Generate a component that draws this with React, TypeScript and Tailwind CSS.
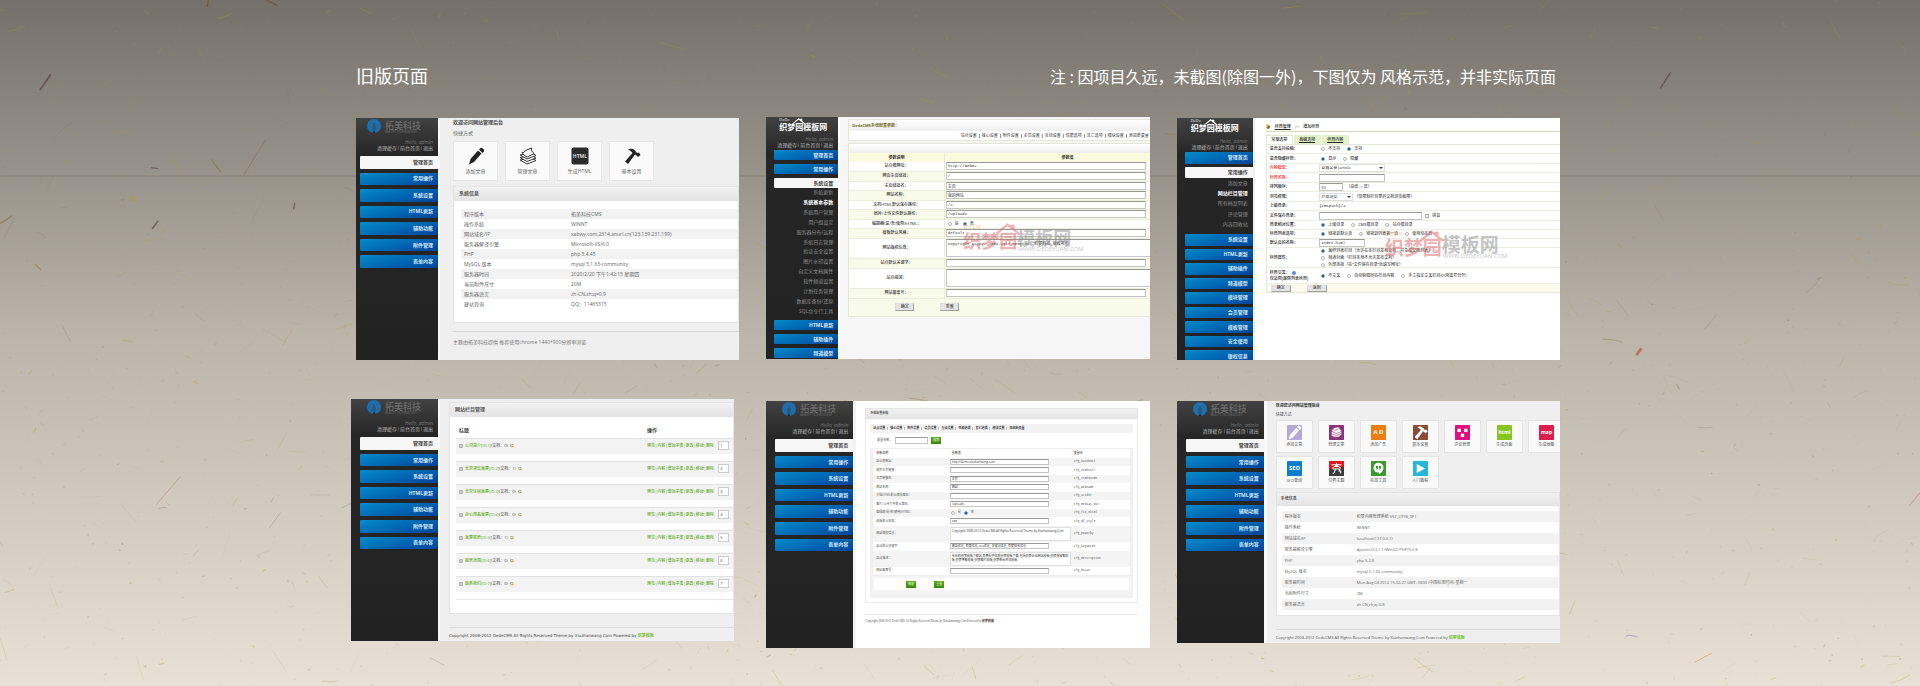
import React from 'react';

/* ---------- paper background ---------- */

function makeRandom(seed: number) {
  let a = seed;
  return () => {
    a = (a + 0x6d2b79f5) | 0;
    let t = Math.imul(a ^ (a >>> 15), 1 | a);
    t = (t + Math.imul(t ^ (t >>> 7), 61 | t)) ^ t;
    return ((t ^ (t >>> 14)) >>> 0) / 4294967296;
  };
}

const random = makeRandom(20);
const fibres = Array.from({ length: 2200 }, () => {
  const x = random() * 1920;
  const y = random() * 686;
  const len = 1.5 + Math.pow(random(), 6) * 26;
  const a = (random() - 0.5) * 2.6;
  const bend = (random() - 0.5) * 5;
  const dx = Math.cos(a) * len;
  const dy = Math.sin(a) * len;
  return {
    d: `M${x.toFixed(1)} ${y.toFixed(1)}q${(dx / 2).toFixed(1)} ${(dy / 2 + (len > 6 ? bend : 0)).toFixed(1)} ${dx.toFixed(1)} ${dy.toFixed(1)}`,
    stroke: random() > 0.2 ? '#b39345' : '#8a6a50',
    opacity: 0.08 + Math.pow(random(), 2) * 0.34,
    width: len > 6 ? 0.8 : 1.2,
  };
});

const longFibres = [
  { d: 'M43 90L54 74', stroke: '#5f4a4c', w: 1.6 },
  { d: 'M155 228L161 220', stroke: '#64525a', w: 1.6 },
  { d: 'M246 175L268 139', stroke: '#8a6c58', w: 0.8 },
  { d: 'M214 159L223 171', stroke: '#8a6d48', w: 1 },
  { d: 'M159 503L183 475', stroke: '#b9977f', w: 0.9 },
  { d: 'M0 224Q8 221 15 215', stroke: '#8d7356', w: 1 },
  { d: 'M269 0L280 6', stroke: '#66503f', w: 1.1 },
  { d: 'M211 0L210 7', stroke: '#75562c', w: 1.3 },
  { d: 'M154 167L161 168', stroke: '#6d5560', w: 1.2 },
  { d: 'M296 209L297 202', stroke: '#6e5560', w: 1.4 },
  { d: 'M38 263L44 269', stroke: '#9a8140', w: 1 },
  { d: 'M1634 354L1639 347', stroke: '#c05a5a', w: 2.6 },
  { d: 'M1692 660L1709 651', stroke: '#cfa182', w: 0.9 },
  { d: 'M1906 504L1920 487', stroke: '#b9977f', w: 1 },
  { d: 'M1623 634Q1628 632 1635 635', stroke: '#b4a4b8', w: 1.1 },
  { d: 'M1674 383L1677 388', stroke: '#9a8c80', w: 1 },
  { d: 'M1658 88L1668 72', stroke: '#5f4a4c', w: 1.4 },
  { d: 'M1600 338Q1612 338 1620 341', stroke: '#a08a60', w: 0.8 },
];

const Paper = () => (
  <svg aria-hidden="true" className="absolute inset-0 h-full w-full" viewBox="0 0 1920 686" preserveAspectRatio="xMidYMin slice" fill="none">
    <path d="M0 175.5H1920" stroke="#7f776b" strokeOpacity=".6" />
    <ellipse cx="136" cy="198" rx="3.5" ry="3" fill="#a89a55" opacity=".6" />
    {fibres.map((f, i) => (
      <path key={i} d={f.d} stroke={f.stroke} strokeOpacity={f.opacity} strokeWidth={f.width} />
    ))}
    {longFibres.map((f, i) => (
      <path key={i} d={f.d} stroke={f.stroke} strokeWidth={f.w} strokeOpacity=".8" />
    ))}
  </svg>
);

/* ---------- logos ---------- */

const TuomeiLogo = () => (
  <div className="flex h-[20px] items-start gap-1 pt-px">
    <svg aria-hidden="true" viewBox="0 0 28 28" className="h-[14px] w-[14px] shrink-0">
      <circle cx="14" cy="14" r="14" fill="#1c6fae" />
      <path d="M14 0Q10.500 12 12 28h4Q17.500 12 14 0Z" fill="#222" />
      <path d="M14 3v22" stroke="#5aa7dc" strokeWidth="1.500" />
    </svg>
    <div className="pt-px text-[#6d6d6d]">
      <div className="text-[9px] leading-[11px] font-medium whitespace-nowrap">拓美科技</div>
      <div className="text-[3px] leading-[3px] whitespace-nowrap">BEAUTY TECHNOLOGY</div>
    </div>
  </div>
);

const roof = 'M2 20L22 3l7 6V5h4v7l10 8';

const DedeLogo = () => (
  <div className="relative h-[18px] whitespace-nowrap text-white">
    <div className="flex items-end pt-[5px]">
      <span className="text-[8px] leading-[10px] font-bold">织梦园</span>
      <span className="text-[8px] leading-[10px] font-bold">模板网</span>
    </div>
    <svg aria-hidden="true" viewBox="0 0 46 22" className="absolute top-px left-[12px] h-[6px] w-[16px]" fill="none" stroke="#fff" strokeWidth="4">
      <path d={roof} />
    </svg>
    <span className="absolute top-px left-0 text-[4px] leading-[4px]">DeDe</span>
  </div>
);

const Watermark = ({ className, large }: { className: string; large?: boolean }) => (
  <div className={`pointer-events-none absolute whitespace-nowrap opacity-50 ${className}`}>
    <svg
      aria-hidden="true" viewBox="0 0 46 22" fill="none" stroke="#d9666a" strokeWidth="4"
      className={`absolute top-0 h-[12px] w-[26px] ${large ? 'left-[34px]' : 'left-[32px]'}`}
    >
      <path d={roof} />
    </svg>
    <div className="text-[7px] leading-[8px] text-[#f0a860]">DeDe</div>
    <div className={`flex items-start font-bold ${large ? 'text-[19px]' : 'text-[18px]'}`}>
      <span className="leading-[20px] text-[#d9666a]">织梦园</span>
      <span className="flex flex-col text-[#8c8c8c]">
        <span className="leading-[14px]">模板网</span>
        <span className="pt-px pl-px text-[6px] leading-[6px] font-normal">WWW.DEDEYUAN.COM</span>
      </span>
    </div>
  </div>
);

/* ---------- sidebar ---------- */

type Group = { items: string[]; grid: string; active?: number; sub?: string[]; subGrid?: string; current?: string };

const Sidebar = ({ logo, width, links, navClass, groups, className = '' }: {
  logo: React.ReactNode; width: string; links: string; navClass: string; groups: Group[]; className?: string;
}) => (
  <aside className={`shrink-0 overflow-hidden bg-[#222] bg-linear-to-b from-[#424242] via-[#262626] via-15% to-[#222] ${width} ${className}`}>
    {logo}
    <div className={`text-right ${links}`}>
      <div className="text-[5px] leading-[6px] text-[#777] italic">Hello, admin</div>
      <div className="flex justify-end gap-px text-[5px] leading-[6px] whitespace-nowrap text-[#b5b5b5]">
        <a href="#cache">清理缓存</a><i className="w-px scale-y-75 bg-[#555]" />
        <a href="#home">前台首页</a><i className="w-px scale-y-75 bg-[#555]" />
        <a href="#exit">退出</a>
      </div>
    </div>
    <nav className={`flex flex-col text-right text-[5px] ${navClass}`}>
      {groups.map((g, gi) => (
        <React.Fragment key={gi}>
          <div className={`grid auto-rows-fr ${g.grid}`}>
            {g.items.map((t, i) => (
              <a
                key={t}
                href="#nav"
                className={`flex items-center justify-end rounded-l-[1px] pr-[5px] leading-none font-bold whitespace-nowrap ${
                  g.active === i ? 'bg-[#f6f6f6] text-[#444]' : 'bg-linear-165 from-[#0b8bca] via-[#0068b4] to-[#00439a] text-[#d6e6f6]'
                }`}
              >
                {t}
              </a>
            ))}
          </div>
          {g.sub && (
            <ul className={`grid auto-rows-fr items-center pr-[5px] text-[#8f8f8f] ${g.subGrid}`}>
              {g.sub.map((t) => (
                <li key={t} className={`leading-none whitespace-nowrap ${t === g.current ? 'font-bold text-white' : ''}`}>
                  <a href="#sub">{t}</a>
                </li>
              ))}
            </ul>
          )}
        </React.Fragment>
      ))}
    </nav>
  </aside>
);

const mainNav: Group[] = [
  { items: ['管理首页', '常用操作', '系统设置', 'HTML更新', '辅助功能', '附件管理', '表单内容'], grid: 'h-[112px] gap-1', active: 0 },
];

const TuomeiSidebar = ({ wide, className = '' }: { wide?: boolean; className?: string }) => (
  <Sidebar
    className={className}
    width={wide ? 'w-[87px]' : 'w-[82px]'}
    logo={<div className={wide ? 'pl-[16px]' : 'pl-[11px]'}><TuomeiLogo /></div>}
    links="pt-px pr-[5px] h-[18px]"
    navClass={wide ? 'pl-[9px]' : 'pl-[4px]'}
    groups={mainNav}
  />
);

/* ---------- shared pieces ---------- */

const Shot = ({ children, className = '', clip = true }: { children: React.ReactNode; className?: string; clip?: boolean }) => (
  <section className={`relative flex aspect-[383/242] ${clip ? 'overflow-hidden' : ''} ${className}`}>{children}</section>
);

const Heading = ({ children, className }: { children: React.ReactNode; className: string }) => (
  <h2 className={`border border-[#e4e4e4] bg-linear-to-b from-[#f2f2f2] to-[#e4e4e4] font-bold text-[#555] ${className}`}>{children}</h2>
);

const field = 'block border border-[#c4c4c4] border-t-[#999] bg-white p-0 pl-px leading-none text-[#333] outline-none';

const Radio = ({ name, label, on }: { name: string; label: string; on?: boolean }) => (
  <label className="flex items-center gap-[3px] whitespace-nowrap">
    <input type="radio" name={name} defaultChecked={on} className="m-0 h-[4px] w-[4px] appearance-none rounded-full border border-[#b5b5b5] bg-white checked:border-[#7fa9cf] checked:bg-[#124a82]" />
    {label}
  </label>
);

const InfoTable = ({ rows, row, label }: { rows: string[][]; row: string; label: string }) => (
  <table className="w-full table-fixed border-collapse leading-none text-[#666]">
    <tbody>
      {rows.map(([k, v]) => (
        <tr key={k} className={`odd:bg-[#f2f2f2] ${row}`}>
          <th scope="row" className={`p-0 pl-[3px] text-left font-normal ${label}`}>{k}</th>
          <td className="p-0 whitespace-nowrap">{v}</td>
        </tr>
      ))}
    </tbody>
  </table>
);

/* ---------- 1: dashboard ---------- */

const Pencil = ({ fill }: { fill: string }) => (
  <g fill={fill}>
    <path d="M7 24L22 7l7 6L14 30l-10 5Z" />
    <path d="M24 5l3-3q2-1 4 .5l3 3q1 2-.5 4l-2.500 2.500Z" />
  </g>
);

const Hammer = ({ fill }: { fill: string }) => (
  <path fill={fill} d="M10 5Q19 1 25 8l3 4 4-1 3 5-5 4-4-4-2-1L10 34l-6-5L19 12Q16 7 10 5Z" />
);

const dashIcons = [
  { label: '添加文章', art: <Pencil fill="#222" /> },
  {
    label: '管理文章',
    art: (
      <g fill="#fff" stroke="#333" strokeWidth="2" strokeLinejoin="round">
        <path d="M2 26l14 8 18-7-9-5Z" /><path d="M2 21l14 8 18-7-9-5Z" /><path d="M2 16l14 8 18-7-9-5Z" />
        <path d="M6 11q5 1 7-4l12-5q-2 6 5 11l-13 7Q9 18 6 11Z" />
      </g>
    ),
  },
  {
    label: '生成HTML',
    art: (
      <g>
        <rect x="1" y="1" width="34" height="34" rx="4" fill="#2b2b2b" />
        <text x="18" y="22" textAnchor="middle" fontSize="10" fontWeight="bold" fill="#ddd">HTML</text>
      </g>
    ),
  },
  { label: '基本设置', art: <Hammer fill="#222" /> },
];

const Dashboard = () => (
  <Shot>
    <TuomeiSidebar />
    <div className="min-w-0 flex-1 border-l-2 border-[#f8f8f8] bg-[#efefef] pl-[13px] text-[5px]">
      <h1 className="text-[5px] leading-[8px] font-bold text-[#444]">欢迎访问网站管理后台</h1>
      <p className="pt-px leading-[12px] text-[#666]">快捷方式</p>
      <div className="mt-[2px] flex gap-[7px]">
        {dashIcons.map((d) => (
          <a key={d.label} href="#quick" className="flex h-[40px] w-[45px] flex-col items-center border border-[#e6e6e6] bg-[#fafafa] pt-[5px] leading-[10px] text-[#666]">
            <svg aria-hidden="true" viewBox="0 0 36 36" className="mb-px h-[18px] w-[18px]">{d.art}</svg>
            {d.label}
          </a>
        ))}
      </div>
      <Heading className="mt-[5px] h-[15px] pl-[5px] text-[5px] leading-[13px]">系统信息</Heading>
      <div className="h-[122px] border border-t-0 border-[#e4e4e4] bg-white pt-[8px] pl-[7px]">
        <InfoTable
          row="h-[10px]"
          label="w-[110px]"
          rows={[
            ['程序版本', '拓美科技CMS'],
            ['操作系统', 'WINNT'],
            ['网站域名/IP', 'xabwy.com,2314,anurl.cn(123.139.231.199)'],
            ['服务器解译引擎', 'Microsoft-IIS/6.0'],
            ['PHP', 'php 5.4.45'],
            ['MySQL 版本', 'mysql 5.1.63-community'],
            ['服务器时间', '2020/2/20 下午1:42:15 星期四'],
            ['当前附件尺寸', '20M'],
            ['服务器语言', 'zh-CN,zh;q=0.9'],
            ['建站咨询', 'QQ：11465315'],
          ]}
        />
      </div>
      <footer className="mt-[8px] border-t border-[#d8d8d8] pt-[5px] leading-[10px] whitespace-nowrap text-[#777]">
        主题由拓美科技提供 推荐使用chrome 1440*900分辨率浏览
      </footer>
    </div>
  </Shot>
);

/* ---------- 2: system parameters (light theme) ---------- */

const settingTabs = ['站点设置', '核心设置', '附件设置', '会员设置', '互动设置', '性能选项', '其它选项', '模块设置', '添加新变量'];

const yellowRows: { label: string; kind: 'text' | 'area' | 'radio'; value: string }[] = [
  { label: '站点根网址：', kind: 'text', value: 'http://web02' },
  { label: '网页主页链接：', kind: 'text', value: '/' },
  { label: '主页链接名：', kind: 'text', value: '主页' },
  { label: '网站名称：', kind: 'text', value: '我的网站' },
  { label: '文档HTML默认保存路径：', kind: 'text', value: '/a' },
  { label: '图片/上传文件默认路径：', kind: 'text', value: '/uploads' },
  { label: '编辑器(是/否)使用XHTML：', kind: 'radio', value: '' },
  { label: '模板默认风格：', kind: 'text', value: 'default' },
  { label: '网站版权信息：', kind: 'area', value: 'Copyright &copy; 2002-2017 DEDECMS. 织梦科技 版权所有' },
  { label: '站点默认关键字：', kind: 'text', value: '' },
  { label: '站点描述：', kind: 'area', value: '' },
  { label: '网站备案号：', kind: 'text', value: '' },
];

const grayButton = 'border border-[#dcdcdc] border-r-[#a0a0a0] border-b-[#a0a0a0] bg-[#e4e4e4] text-[4px] leading-none text-[#222]';

const YellowSettings = () => (
  <Shot className="-mt-px">
    <Sidebar
      width="w-[72px]"
      logo={<div className="pl-[13px]"><DedeLogo /></div>}
      links="pt-px pr-[5px] h-[15px]"
      navClass="pl-[8px] gap-1"
      groups={[
        {
          items: ['管理首页', '常用操作', '系统设置'], grid: 'h-[38px] gap-1', active: 2,
          subGrid: 'h-[128px] -mt-1', current: '系统基本参数',
          sub: ['系统更新', '系统基本参数', '系统用户管理', '用户组设定', '服务器分布/远程', '系统日志管理', '验证安全设置', '图片水印设置', '自定义文档属性', '软件频道设置', '计划任务管理', '数据库备份/还原', 'SQL命令行工具'],
        },
        { items: ['HTML更新', '辅助插件', '频道模型'], grid: 'h-[38px] gap-1' },
      ]}
    />
    <div className="min-w-0 flex-1 overflow-hidden border-l-2 border-white bg-[#f6f6f6] pt-[2px] pl-[8px] text-[4px] text-[#333]">
      <div className="border border-r-0 border-[#e4e6da] bg-white">
        <h1 className="h-[11px] bg-linear-to-b from-white to-[#efefef] pl-[3px] text-[4px] leading-[11px] font-bold text-[#6e6a1c]">DedeCMS系统配置参数：</h1>
        <div className="flex h-[9px] items-center justify-end gap-[2px] pr-px whitespace-nowrap text-[#333]">
          {settingTabs.map((t, i) => (
            <React.Fragment key={t}>
              {i > 0 && <i className="h-[4px] w-px bg-[#999]" />}
              <a href="#tab" className="leading-none">{t}</a>
            </React.Fragment>
          ))}
        </div>
      </div>
      <div className="mt-[2px] w-[343px] border border-[#e4e6da]">
        <div className="h-[9px] bg-linear-to-b from-white to-[#eeeeee]" />
        <table className="w-full table-fixed border-collapse leading-none">
          <thead>
            <tr className="h-[9px] bg-[#fafbdc]">
              <th className="w-[95px] border-r border-[#e8ead8] p-0 font-bold">参数说明</th>
              <th className="p-0 font-bold">参数值</th>
            </tr>
          </thead>
          <tbody>
            {yellowRows.map((r) => (
              <tr key={r.label} className={`border-b border-[#ebeedd] odd:bg-white even:bg-[#f9fbea] ${r.kind === 'area' ? 'h-[20px]' : 'odd:h-[9px] even:h-[10px]'}`}>
                <th scope="row" className="border-r border-[#e8ead8] p-0 font-medium whitespace-nowrap">{r.label}</th>
                <td className="p-0 pl-px">
                  {r.kind === 'text' && <input aria-label={r.label} defaultValue={r.value} className={`h-[8px] w-[200px] font-['Liberation_Mono','Noto_Sans_CJK_SC',monospace] text-[4px] ${field}`} />}
                  {r.kind === 'area' && <textarea aria-label={r.label} defaultValue={r.value} className={`h-[18px] w-[240px] resize-none overflow-hidden pt-[2px] font-['Liberation_Mono','Noto_Sans_CJK_SC',monospace] text-[4px] ${field}`} />}
                  {r.kind === 'radio' && (
                    <div className="flex gap-[4px] pl-[2px]"><Radio name="xhtml" label="是" /><Radio name="xhtml" label="否" on /></div>
                  )}
                </td>
              </tr>
            ))}
          </tbody>
        </table>
        <div className="flex h-[17px] items-center gap-[26px] bg-[#f9fbea] pl-[46px]">
          <button className={`h-[8px] w-[19px] ${grayButton}`}>确定</button>
          <button className={`h-[8px] w-[19px] ${grayButton}`}>重置</button>
        </div>
      </div>
    </div>
    <Watermark className="top-[106px] left-[197px]" />
  </Shot>
);

/* ---------- 3: add a column ---------- */

const ColumnRow = ({ label, red, inset, h = 'h-[10px]', children }: { label: React.ReactNode; red?: boolean; inset?: boolean; h?: string; children: React.ReactNode }) => (
  <tr className={`border-b border-[#ecede4] ${h}`}>
    <th scope="row" className={`w-[53px] p-0 pl-[3px] text-left font-medium whitespace-nowrap ${red ? 'text-[#f01818]' : ''}`}>{label}</th>
    <td className="p-0"><div className={`flex items-center gap-[7px] whitespace-nowrap ${inset ? 'pl-[2px]' : ''}`}>{children}</div></td>
  </tr>
);

const smallSelect = 'h-[8px] appearance-none border border-[#e0e0e0] bg-white p-0 pl-px text-[4px] leading-none text-[#222]';

const AddColumn = () => (
  <Shot>
    <Sidebar
      width="w-[76px]"
      logo={<div className="pl-[14px]"><DedeLogo /></div>}
      links="pt-[2px] pr-[5px] h-[16px]"
      navClass="pl-[8px]"
      groups={[
        { items: ['管理首页', '常用操作'], grid: 'h-[26px] gap-[3px]', active: 1, subGrid: 'h-[52px] mb-1', current: '网站栏目管理', sub: ['添加文章', '网站栏目管理', '所有档案列表', '评论管理', '内容回收站'] },
        { items: ['系统设置', 'HTML更新', '辅助插件', '频道模型', '模块管理', '会员管理', '模板管理', '安全使用', '版权信息'], grid: 'h-[128px] shrink-0 gap-[3px]' },
      ]}
    />
    <div className="min-w-0 flex-1 overflow-hidden border-l-2 border-[#eee] bg-white pl-[11px] text-[4px] text-[#222]">
      <div className="flex h-[14px] items-center gap-[4px] border-b border-[#d6d8bc] pt-[4px] font-medium">
        <svg aria-hidden="true" viewBox="0 0 12 12" className="h-[5px] w-[5px]">
          <path d="M1 1h5v7H1Z" fill="#d8b93c" /><path d="M6 3l4 3-2 5H3Z" fill="#9c4a34" /><path d="M1 8l6 3" stroke="#3a7a36" strokeWidth="2" />
        </svg>
        <a href="#columns" className="underline">栏目管理</a><span>&gt;&gt;</span><span>增加栏目</span>
      </div>
      <div className="mt-[3px] flex gap-px text-center leading-[8px] font-medium">
        <button className="h-[9px] w-[27px] border border-b-0 border-[#e4e6da] bg-white">常规选项</button>
        <button className="h-[9px] w-[27px] bg-[#e3f2c8] underline">高级选项</button>
        <button className="h-[9px] w-[27px] bg-[#e3f2c8] underline">栏目内容</button>
      </div>
      <table className="w-full border-collapse border border-r-0 border-[#e4e6da] leading-none">
        <tbody>
          <ColumnRow label="是否支持投稿：" inset h="h-[9px]"><Radio name="post" label="不支持" /><Radio name="post" label="支持" on /></ColumnRow>
          <ColumnRow label="是否隐藏栏目：" inset><Radio name="hide" label="显示" on /><Radio name="hide" label="隐藏" /></ColumnRow>
          <ColumnRow label="内容模型：" red h="h-[9px]">
            <span className="relative">
              <select aria-label="内容模型" className={`w-[66px] ${smallSelect}`}><option>普通文章|article</option></select>
              <i className="absolute top-[3px] right-[2px] border-x-2 border-t-2 border-x-transparent border-t-[#333]" />
            </span>
          </ColumnRow>
          <ColumnRow label="栏目名称：" red><input aria-label="栏目名称" className={`h-[8px] w-[66px] text-[4px] ${field}`} /></ColumnRow>
          <ColumnRow label="排列顺序：" h="h-[9px]"><input aria-label="排列顺序" defaultValue="50" className={`h-[8px] w-[24px] text-[4px] ${field}`} /><span className="-ml-[4px]">（由低 -&gt; 高）</span></ColumnRow>
          <ColumnRow label="浏览权限：">
            <span className="relative">
              <select aria-label="浏览权限" className={`w-[34px] ${smallSelect}`}><option>开放浏览</option></select>
              <i className="absolute top-[3px] right-[2px] border-x-2 border-t-2 border-x-transparent border-t-[#333]" />
            </span>
            <span className="-ml-[6px]">（仅限制栏目里的文档浏览权限）</span>
          </ColumnRow>
          <ColumnRow label="上级目录：" h="h-[9px]"><span className="font-['Liberation_Mono',monospace]">{'{cmspath}/a'}</span></ColumnRow>
          <ColumnRow label="文件保存目录：">
            <input aria-label="文件保存目录" className={`h-[8px] w-[103px] text-[4px] ${field}`} />
            <label className="-ml-[4px] flex items-center gap-[3px]"><input type="checkbox" className="h-[4px] w-[4px] appearance-none border border-[#aaa] bg-white" />拼音</label>
          </ColumnRow>
          <ColumnRow label="目录相对位置：" inset h="h-[9px]"><Radio name="dir" label="上级目录" on /><Radio name="dir" label="CMS根目录" /><Radio name="dir" label="站点根目录" /></ColumnRow>
          <ColumnRow label="栏目列表选项：" inset h="h-[9px]"><Radio name="list" label="链接到默认页" on /><Radio name="list" label="链接到列表第一页" /><Radio name="list" label="使用动态页" /></ColumnRow>
          <ColumnRow label="默认页的名称：" h="h-[9px]"><input aria-label="默认页的名称" defaultValue="index.html" className={`h-[8px] w-[46px] font-['Liberation_Mono',monospace] text-[4px] ${field}`} /></ColumnRow>
          <ColumnRow label="栏目属性：" inset h="h-[20px]">
            <div className="flex flex-col gap-[3px]">
              <Radio name="attr" label="最终列表栏目（允许在本栏目发布文档，并生成文档列表）" on />
              <Radio name="attr" label="频道封面（栏目本身不允许发布文档）" />
              <Radio name="attr" label="外部连接（在“文件保存目录”处填写网址）" />
            </div>
          </ColumnRow>
          <ColumnRow
            inset
            h="h-[16px]"
            label={(
              <div className="leading-[6px]">
                <div className="flex items-center gap-[2px]">栏目交叉：<i className="h-[4px] w-[4px] rounded-full bg-[#5b8fd0]" /></div>
                <div>仅适用[最终列表栏目]</div>
              </div>
            )}
          >
            <Radio name="cross" label="不交叉" on /><Radio name="cross" label="自动获取同名栏目内容" /><Radio name="cross" label="手工指定交叉栏目ID(用逗号分开)" />
          </ColumnRow>
        </tbody>
      </table>
      <div className="flex h-[9px] items-center gap-[16px] border-b border-l border-[#e4e6da] bg-[#fafbea] pl-[4px]">
        <button className={`h-[7px] w-[20px] ${grayButton}`}>确定</button>
        <button className={`h-[7px] w-[20px] ${grayButton}`}>返回</button>
      </div>
    </div>
    <Watermark large className="top-[112px] left-[208px]" />
  </Shot>
);

/* ---------- 4: column list ---------- */

const columns = [
  ['公司简介', '0'], ['北京餐饮发票', '1'], ['北京住宿发票', '0'], ['办公用品发票', '0'], ['发票展示', '1'], ['服务范围', '0'], ['联系我们', '0'],
];

const Copyright = ({ className }: { className: string }) => (
  <footer className={`whitespace-nowrap ${className}`}>
    Copyright 2008-2012 DedeCMS All Rights Reserved Theme by Xiuzhanwang.Com Powered by{' '}
    <a href="#dede" className="font-bold text-[#7ac030]">织梦模板</a>
  </footer>
);

const ColumnList = () => (
  <Shot className="-mt-[2px] mr-[5px] -ml-[5px]">
    <TuomeiSidebar wide />
    <div className="min-w-0 flex-1 overflow-hidden border-l-2 border-[#f8f8f8] bg-[#efefef] pt-[3px] pl-[9px] text-[4px] text-[#444]">
      <Heading className="h-[15px] pl-[5px] text-[5px] leading-[13px]">网站栏目管理</Heading>
      <div className="h-[197px] border border-t-0 border-[#e4e4e4] bg-white pt-[6px] pl-[6px]">
        <table className="w-full table-fixed border-collapse border-b border-[#e6e6e6] leading-none">
          <thead>
            <tr className="h-[15px] text-left text-[5px]">
              <th className="w-[191px] p-0 pt-px pl-[3px]">标题</th>
              <th className="p-0 pt-px">操作</th>
            </tr>
          </thead>
          <tbody>
            {columns.map(([name, count], i) => (
              <tr key={name} className="h-[23px] border-t border-[#e2e2e2] bg-linear-to-b from-[#f3f3f3] from-68% to-white to-68%">
                <td className="p-0 pb-[8px] pl-[3px]">
                  <div className="flex items-center gap-[2px] whitespace-nowrap">
                    <svg aria-hidden="true" viewBox="0 0 8 8" className="h-[4px] w-[4px]" fill="none" stroke="#777"><path d="M1 1h6v6H1ZM4 2.500v3M2.500 4h3" /></svg>
                    <span><a href="#column" className="font-medium text-[#62a818]">{name}[ID:{i + 1}]</a>(文档：{count})</span>
                    <svg aria-hidden="true" viewBox="0 0 8 8" className="h-[4px] w-[4px]" fill="none"><path d="M1 1h5v4H1Z" stroke="#6a8a4a" /><path d="M4 7l4-4" stroke="#e8a020" strokeWidth="2" /></svg>
                  </div>
                </td>
                <td className="p-0 pb-[8px]">
                  <div className="flex items-center justify-between pr-[4px] whitespace-nowrap">
                    <a href="#actions" className="font-medium text-[#62a818]">预览|内容|增加子类|更改|移动|删除</a>
                    <input aria-label={`${name}排序`} defaultValue={i + 1} className="h-[9px] w-[11px] border border-[#ccc] bg-white p-0 pl-px text-[4px] leading-none" />
                  </div>
                </td>
              </tr>
            ))}
          </tbody>
        </table>
      </div>
      <Copyright className="mt-[13px] border-t border-[#dcdcdc] pt-[3px] font-['DejaVu_Sans','Noto_Sans_CJK_SC',sans-serif] leading-[10px]" />
    </div>
  </Shot>
);

/* ---------- 5: system parameters (white theme) ---------- */

const whiteRows: { label: string; kind: 'text' | 'area' | 'radio'; value: string; name: string }[] = [
  { label: '站点根网址：', kind: 'text', value: 'http://demo.xiuzhanwang.com', name: 'cfg_basehost' },
  { label: '网页主页链接：', kind: 'text', value: '', name: 'cfg_indexurl' },
  { label: '主页链接名：', kind: 'text', value: '主页', name: 'cfg_indexname' },
  { label: '网站名称：', kind: 'text', value: '网站', name: 'cfg_webname' },
  { label: '文档HTML默认保存路径：', kind: 'text', value: '', name: 'cfg_arcdir' },
  { label: '图片/上传文件默认路径：', kind: 'text', value: '/uploads', name: 'cfg_medias_dir' },
  { label: '编辑器(是/否)使用XHTML：', kind: 'radio', value: '', name: 'cfg_fck_xhtml' },
  { label: '模板默认风格：', kind: 'text', value: 'xzw', name: 'cfg_df_style' },
  { label: '网站版权信息：', kind: 'area', value: 'Copyright 2008-2012 DedeCMS All Rights Reserved Theme by Xiuzhanwang.Com', name: 'cfg_powerby' },
  { label: '站点默认关键字：', kind: 'text', value: '网站优化, 百度优化, seo优化, 关键词优化, 百度排名优化', name: 'cfg_keywords' },
  { label: '站点描述：', kind: 'area', value: '专业的织梦模板下载站,免费提供优质织梦模板下载,包括织梦企业网站模板,织梦淘宝客模板,织梦博客模板,织梦图片模板,织梦新闻资讯模板', name: 'cfg_description' },
  { label: '网站备案号：', kind: 'text', value: '', name: 'cfg_beian' },
];

const greenButton = 'h-[7px] w-[10px] bg-linear-to-b from-[#58ac12] to-[#378806] text-[3px] leading-none text-white';

const WhiteSettings = () => (
  <Shot clip={false}>
    <TuomeiSidebar wide className="h-[calc(100%+5px)]" />
    <div className="h-[calc(100%+5px)] w-[3px] shrink-0 bg-[#f3f3f3]" />
    <div className="min-w-0 flex-1 overflow-hidden bg-white pt-[7px] pr-[12px] pl-[9px] text-[3px] text-[#555]">
      <Heading className="h-[11px] pl-[4px] text-[3px] leading-[9px]">系统配置参数</Heading>
      <div className="border border-t-0 border-[#ececec] px-[4px] pt-[5px] pb-[4px]">
        <div className="flex h-[9px] items-center gap-[2px] bg-[#f2f2f2] pl-[3px] font-bold whitespace-nowrap text-[#333]">
          {settingTabs.map((t, i) => (
            <React.Fragment key={t}>
              {i > 0 && <i className="h-[3px] w-px bg-[#bbb]" />}
              <a href="#tab" className="leading-none">{t}</a>
            </React.Fragment>
          ))}
        </div>
        <div className="flex h-[15px] items-center gap-[3px] pl-[7px]">
          <label htmlFor="param">配置参数：</label>
          <input id="param" className={`h-[7px] w-[33px] text-[3px] ${field}`} />
          <button className={greenButton}>搜索</button>
        </div>
        <div className="border-x-[2px] border-b-[6px] border-[#f2f2f2]">
          <table className="w-full table-fixed border-collapse border border-[#eee] leading-none">
            <thead>
              <tr className="h-[9px] text-left">
                <th className="w-[77px] p-0 pl-[3px] font-medium">参数说明</th>
                <th className="w-[124px] p-0 pl-[2px] font-medium">参数值</th>
                <th className="p-0 font-medium">变量名</th>
              </tr>
            </thead>
            <tbody>
              {whiteRows.map((r) => (
                <tr key={r.label} className={`odd:bg-[#f4f4f4] ${r.kind === 'area' ? 'h-[16px]' : 'odd:h-[8px] even:h-[9px]'}`}>
                  <th scope="row" className="p-0 pl-[3px] text-left font-normal whitespace-nowrap">{r.label}</th>
                  <td className="p-0">
                    {r.kind === 'text' && <input aria-label={r.label} defaultValue={r.value} className={`h-[6px] w-[99px] text-[3px] ${field}`} />}
                    {r.kind === 'area' && <textarea aria-label={r.label} defaultValue={r.value} className="block h-[14px] w-[121px] resize-none overflow-hidden border border-[#e0e0e0] bg-white p-0 pt-px pl-px text-[3px] leading-[4px] text-[#333]" />}
                    {r.kind === 'radio' && <div className="flex gap-[3px] pl-px"><Radio name="xhtml5" label="是" /><Radio name="xhtml5" label="否" on /></div>}
                  </td>
                  <td className="p-0 font-['Liberation_Mono',monospace]">{r.name}</td>
                </tr>
              ))}
            </tbody>
          </table>
          <div className="flex h-[16px] items-center gap-[18px] border-2 border-[#f4f4f4] bg-white pl-[32px]">
            <button className={greenButton}>确定</button>
            <button className={greenButton}>重置</button>
          </div>
        </div>
      </div>
      <Copyright className="mt-[11px] border-t border-[#e6e6e6] pt-[3px] font-['Liberation_Serif','Noto_Sans_CJK_SC',serif] text-[3px] leading-[6px] [&>a]:text-[#333]" />
    </div>
  </Shot>
);

/* ---------- 6: colour dashboard ---------- */

const Word = ({ children, size = 13 }: { children: string; size?: number }) => (
  <text x="18" y="22" textAnchor="middle" fontSize={size} fontWeight="bold" fill="#fff">{children}</text>
);

const tiles: { label: string; bg: string; art: React.ReactNode }[] = [
  { label: '添加文章', bg: '#b3a9d8', art: <Pencil fill="#fff" /> },
  {
    label: '管理文章', bg: '#8c3478',
    art: (
      <g fill="#fff" stroke="#8c3478" strokeWidth="1.500">
        <path d="M5 25q14 10 26-2l-2-5H7Z" /><path d="M5 20q14 10 26-2l-2-5H7Z" /><path d="M6 14Q13 3 23 5l7 9q-11 12-24 0Z" /><path d="M13 14q5-5 10-2" fill="none" />
      </g>
    ),
  },
  { label: '添加广告', bg: '#ee7d12', art: <Word size={14}>A D</Word> },
  { label: '基本设置', bg: '#8a4b38', art: <Hammer fill="#fff" /> },
  { label: '评论管理', bg: '#e2107f', art: <path fill="#fff" d="M6 9h8v8H6ZM22 9h8v8h-8ZM14 21h8v8h-8Z" /> },
  { label: '生成页面', bg: '#85c51e', art: <Word size={12}>html</Word> },
  { label: '生成地图', bg: '#dc1d4e', art: <Word size={12}>map</Word> },
  { label: 'SEO查询', bg: '#0b7fca', art: <Word size={14}>SEO</Word> },
  {
    label: '付费主题', bg: '#3c3c3c',
    art: (
      <g>
        <path d="M0 0h36v14L0 20Z" fill="#e01822" />
        <path d="M6 9h24M18 5v10M8 17L18 10l10 7M9 19h17l-2 5h4v6M15 19q0 8-6 12" stroke="#fff" strokeWidth="2.500" fill="none" />
      </g>
    ),
  },
  {
    label: '标签工具', bg: '#3a9a2c',
    art: (
      <g>
        <path fill="#fff" d="M18 4a12 12 0 0 1 12 12q0 9-11 16v-5A12 12 0 0 1 18 4Z" />
        <path fill="#fff" d="M18 4a12 12 0 0 0 0 24Z" />
        <path fill="#3a9a2c" d="M12 12h5v5q-1 3-4 4v-4h-1ZM19 12h5v5q-1 3-4 4v-4h-1Z" />
      </g>
    ),
  },
  { label: '入门教程', bg: '#26b6d8', art: <path fill="#fff" d="M9 7l20 11L9 29Z" /> },
];

const ColourDashboard = () => (
  <Shot>
    <TuomeiSidebar wide />
    <div className="min-w-0 flex-1 overflow-hidden border-l-3 border-[#f8f8f8] bg-[#efefef] pl-[9px] text-[4px] text-[#555]">
      <h1 className="pt-px text-[4px] leading-[8px] font-bold text-[#333]">欢迎您访问网站管理后台</h1>
      <p className="leading-[9px]">快捷方式</p>
      <div className="mt-px grid w-[289px] grid-cols-7 gap-x-[5px] gap-y-[3px]">
        {tiles.map((t) => (
          <a key={t.label} href="#tile" className="flex h-[33px] flex-col items-center rounded-[1px] border border-[#e4e4e4] bg-[#f9f9f9] pt-[4px] leading-[8px]">
            <svg aria-hidden="true" viewBox="0 0 36 36" className="mb-px h-[15px] w-[15px]">
              <rect width="36" height="36" rx="2" fill={t.bg} />
              {t.art}
            </svg>
            {t.label}
          </a>
        ))}
      </div>
      <Heading className="mt-[3px] h-[14px] pl-[4px] text-[4px] leading-[12px]">系统信息</Heading>
      <div className="h-[110px] border border-t-0 border-[#e4e4e4] bg-white pt-[5px] pl-[5px]">
        <InfoTable
          row="h-[11px]"
          label="w-[75px]"
          rows={[
            ['程序版本', '织梦内容管理系统 V57_UTF8_SP1'],
            ['操作系统', 'WINNT'],
            ['网站域名/IP', 'localhost(127.0.0.1)'],
            ['服务器解译引擎', 'Apache/2.2.11 (Win32) PHP/5.2.8'],
            ['PHP', 'php 5.2.8'],
            ['MySQL 版本', 'mysql 5.1.30-community'],
            ['服务器时间', 'Mon Aug 04 2014 15:02:27 GMT+0800 (中国标准时间) 星期一'],
            ['当前附件尺寸', '2M'],
            ['服务器语言', 'zh-CN,zh;q=0.8'],
          ]}
        />
      </div>
      <Copyright className="mt-[13px] border-t border-[#dcdcdc] pt-[3px] leading-[9px]" />
    </div>
  </Shot>
);

export default function App() {
  return (
    <main
      lang="zh-CN"
      className="relative min-h-screen overflow-hidden bg-linear-to-b from-[#75716a] via-[#bab4a9] via-48% to-[#e9e1d5] font-['Open_Sans','Noto_Sans_CJK_SC',sans-serif]"
    >
      <Paper />
      <div className="relative mx-auto flex max-w-[1208px] flex-col pt-[58px] pr-[4px] pb-[40px]">
        <header className="flex items-center justify-between font-['Noto_Sans_CJK_SC',sans-serif] text-white">
          <h1 className="text-[18px] leading-[32px]">旧版页面</h1>
          <p className="pt-[3px] pr-[4px] text-[16px] leading-[30px]">注 : 因项目久远，未截图(除图一外)，下图仅为 风格示范，并非实际页面</p>
        </header>
        <div className="mt-[27px] grid grid-cols-3 gap-x-[27px] gap-y-[41px]">
          <Dashboard />
          <YellowSettings />
          <AddColumn />
          <ColumnList />
          <WhiteSettings />
          <ColourDashboard />
        </div>
      </div>
    </main>
  );
}
